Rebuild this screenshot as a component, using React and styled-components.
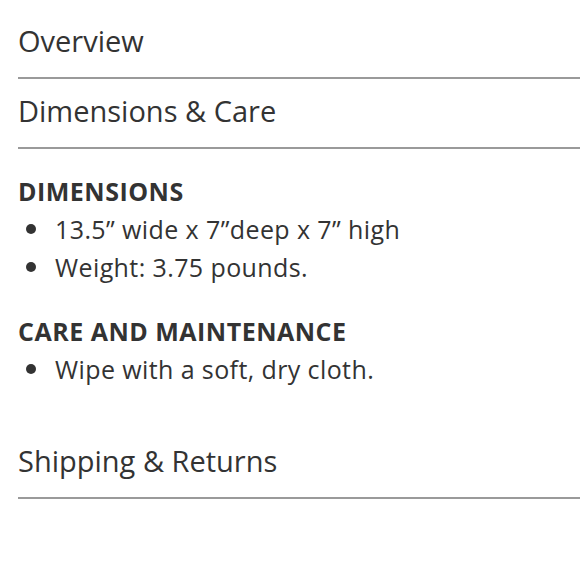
import React from 'react';
import styled, { createGlobalStyle } from 'styled-components';

const GlobalStyle = createGlobalStyle`
  body {
    margin: 0;
    background: #fff;
    font-family: 'Open Sans', Lato, sans-serif;
    color: #333;
  }
`;

const Page = styled.div`
  padding: 9px 0 0 18px;
`;

const Header = styled.h2`
  margin: 0;
  padding: 14px 0 18px;
  border-bottom: 2px solid #9a9a9a;
  font-size: 29px;
  line-height: 36px;
  font-weight: 400;
  color: #333;
`;

const Panel = styled.div`
  padding: 27px 0 41px;
`;

const Heading = styled.h3`
  margin: ${p => p.$gap}px 0 0;
  font-size: 25px;
  line-height: 30px;
  font-weight: 700;
  letter-spacing: 0.5px;
  color: #333;
`;

const List = styled.ul`
  list-style: none;
  margin: 4px 0 0;
  padding: 0;
`;

const Item = styled.li`
  position: relative;
  padding-left: 37px;
  font-size: 25px;
  line-height: 38px;
  letter-spacing: 0.4px;

  &::before {
    content: '';
    position: absolute;
    left: 8px;
    top: 14px;
    width: 10px;
    height: 10px;
    border-radius: 50%;
    background: #333;
  }
`;

const details = [
  {
    title: 'DIMENSIONS',
    items: ['13.5” wide x 7”deep x 7” high', 'Weight: 3.75 pounds.'],
  },
  {
    title: 'CARE AND MAINTENANCE',
    items: ['Wipe with a soft, dry cloth.'],
  },
];

const App = () => {
  return (
    <>
      <GlobalStyle />
      <Page>
        <Header>Overview</Header>
        <Header>Dimensions &amp; Care</Header>
        <Panel>
          {details.map((d, i) => (
            <div key={d.title}>
              <Heading $gap={i ? 30 : 0}>{d.title}</Heading>
              <List>
                {d.items.map(t => <Item key={t}>{t}</Item>)}
              </List>
            </div>
          ))}
        </Panel>
        <Header>Shipping &amp; Returns</Header>
      </Page>
    </>
  );
};

export default App;
